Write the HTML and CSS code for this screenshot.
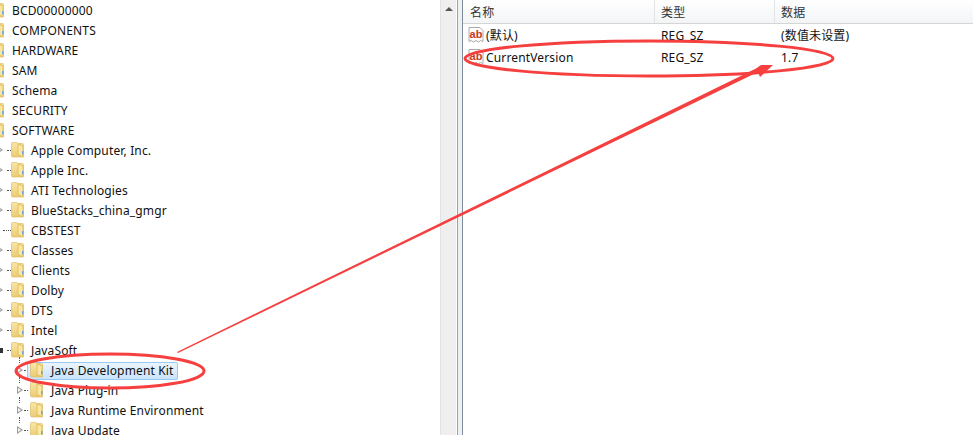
FILE: index.html
```html
<!DOCTYPE html>
<html lang="zh-CN">

<head>
    <meta charset="UTF-8">
    <title>Registry Editor</title>
    <link rel="stylesheet" href="styles.css">
</head>

<body>
    <svg class="defs" width="0" height="0">
        <linearGradient id="folderBack" x1="0" y1="0" x2="0" y2="1">
            <stop offset="0" stop-color="#f8e7a8"/>
            <stop offset="1" stop-color="#eccb74"/>
        </linearGradient>
        <symbol id="folder" viewBox="0 0 16 16">
            <path d="M.5 1.500Q.5 .5 1.500 .5H6l1 1h4.500q1 0 1 1V14q0 1-1 1H2Q.5 15 .5 13.500z" fill="url(#folderBack)" stroke="#d9b660" stroke-width="0.6"/>
            <path d="M6.500 1l6 2.500V15.500L6.500 13z" fill="#e6bf5c"/>
            <path d="M7.500 2.500l4 1.700v9.800l-4-1.700z" fill="#f9e7a6"/>
            <path d="M11 9h1.500v3.500H11z" fill="#6fa8d8"/>
        </symbol>
        <symbol id="page" viewBox="0 0 16 16">
            <path d="M1 .5h11l3 3v11l-2.500-1-2 1.500-2.500-1.500-2.500 1.500L3 13.500 1 14.500z" fill="#fff" stroke="#a9a9a9"/>
        </symbol>
    </svg>

    <div class="tree">
        <div class="row"><svg class="folder"><use href="#folder"/></svg>BCD00000000</div>
        <div class="row"><svg class="folder"><use href="#folder"/></svg>COMPONENTS</div>
        <div class="row"><svg class="folder"><use href="#folder"/></svg>HARDWARE</div>
        <div class="row"><svg class="folder"><use href="#folder"/></svg>SAM</div>
        <div class="row"><svg class="folder"><use href="#folder"/></svg>Schema</div>
        <div class="row"><svg class="folder"><use href="#folder"/></svg>SECURITY</div>
        <div class="row"><svg class="folder"><use href="#folder"/></svg>SOFTWARE</div>

        <div class="row lvl1"><i class="toggle"></i><i class="dots"></i><svg class="folder"><use href="#folder"/></svg>Apple Computer, Inc.</div>
        <div class="row lvl1"><i class="toggle"></i><i class="dots"></i><svg class="folder"><use href="#folder"/></svg>Apple Inc.</div>
        <div class="row lvl1"><i class="toggle"></i><i class="dots"></i><svg class="folder"><use href="#folder"/></svg>ATI Technologies</div>
        <div class="row lvl1"><i class="toggle"></i><i class="dots"></i><svg class="folder"><use href="#folder"/></svg>BlueStacks_china_gmgr</div>
        <div class="row lvl1"><i class="toggle none"></i><i class="dots"></i><svg class="folder"><use href="#folder"/></svg>CBSTEST</div>
        <div class="row lvl1"><i class="toggle"></i><i class="dots"></i><svg class="folder"><use href="#folder"/></svg>Classes</div>
        <div class="row lvl1"><i class="toggle"></i><i class="dots"></i><svg class="folder"><use href="#folder"/></svg>Clients</div>
        <div class="row lvl1"><i class="toggle"></i><i class="dots"></i><svg class="folder"><use href="#folder"/></svg>Dolby</div>
        <div class="row lvl1"><i class="toggle"></i><i class="dots"></i><svg class="folder"><use href="#folder"/></svg>DTS</div>
        <div class="row lvl1"><i class="toggle"></i><i class="dots"></i><svg class="folder"><use href="#folder"/></svg>Intel</div>
        <div class="row lvl1"><i class="toggle open"></i><i class="dots"></i><svg class="folder"><use href="#folder"/></svg>JavaSoft</div>

        <div class="row lvl2"><i class="toggle"></i><i class="dots"></i><span class="selected"><svg class="folder"><use href="#folder"/></svg>Java Development Kit</span></div>
        <div class="row lvl2"><i class="toggle"></i><i class="dots"></i><svg class="folder"><use href="#folder"/></svg>Java Plug-in</div>
        <div class="row lvl2"><i class="toggle"></i><i class="dots"></i><svg class="folder"><use href="#folder"/></svg>Java Runtime Environment</div>
        <div class="row lvl2 last"><i class="toggle"></i><i class="dots"></i><svg class="folder"><use href="#folder"/></svg>Java Update</div>
    </div>

    <div class="scrollbar">
        <div class="scroll-up"></div>
    </div>
    <div class="splitter"></div>

    <div class="values">
        <div class="val-header">
            <div class="col-name">名称</div>
            <div class="col-type">类型</div>
            <div class="col-data">数据</div>
        </div>
        <div class="val-row">
            <div class="col-name"><svg class="regsz" viewBox="0 0 16 16"><use href="#page"/><text x="1.500" y="10.500" class="ab">ab</text></svg>(默认)</div>
            <div class="col-type">REG_SZ</div>
            <div class="col-data">(数值未设置)</div>
        </div>
        <div class="val-row">
            <div class="col-name"><svg class="regsz" viewBox="0 0 16 16"><use href="#page"/><text x="1.500" y="10.500" class="ab">ab</text></svg>CurrentVersion</div>
            <div class="col-type">REG_SZ</div>
            <div class="col-data">1.7</div>
        </div>
    </div>

    <!-- hand drawn annotation on top of the screenshot -->
    <svg class="marks" width="973" height="435" viewBox="0 0 973 435">
        <ellipse cx="110" cy="371" rx="94" ry="17" fill="none" stroke="#f5403f" stroke-width="3"/>
        <ellipse cx="649" cy="58.500" rx="184" ry="17.500" fill="none" stroke="#f5403f" stroke-width="3"/>
        <path d="M177 352L756 68.500L761 65H773L760 77L758 72L178 353Z" fill="#f5403f"/>
    </svg>
</body>

</html>
```

FILE: styles.css
```css
body {
    margin: 0;
    display: flex;
    height: 435px;
    overflow: hidden;
    position: relative;
    background-color: white;
    color: #111;
    font-family: "Noto Sans", "Noto Sans CJK SC", sans-serif;
    font-size: 12px;
    letter-spacing: 0.15px;
}

.defs {
    position: absolute;
}

.tree {
    width: 440px;
    flex-shrink: 0;
    overflow: hidden;
}

.row {
    height: 20px;
    display: flex;
    align-items: center;
    white-space: nowrap;
    position: relative;
}

.folder {
    width: 16px;
    height: 16px;
    flex-shrink: 0;
    margin-left: -9px;
    margin-right: 5px;
}

.lvl1 .folder {
    margin-left: 0;
    margin-right: 4px;
}

.lvl2 .folder {
    margin-left: 0;
    margin-right: 5px;
}

.toggle {
    width: 6px;
    flex-shrink: 0;
    height: 9px;
    position: relative;
}

/* outline triangle: grey one with a white one on top */
.toggle::before {
    content: "";
    position: absolute;
    left: -3px;
    top: 0;
    border-left: 6px solid #9a9a9a;
    border-top: 4.5px solid transparent;
    border-bottom: 4.5px solid transparent;
}

.toggle::after {
    content: "";
    position: absolute;
    left: -2px;
    top: 2px;
    border-left: 3px solid white;
    border-top: 2.5px solid transparent;
    border-bottom: 2.5px solid transparent;
}

.toggle.none::before,
.toggle.none::after,
.toggle.open::after {
    display: none;
}

.toggle.open::before {
    left: -2px;
    top: 2px;
    border: none;
    width: 5px;
    height: 5px;
    background-color: #333;
}

.dots {
    width: 4px;
    flex-shrink: 0;
    height: 0;
    margin-left: 1px;
    border-top: 1px dotted #555;
}

.toggle.none + .dots {
    width: 8px;
    margin-left: -3px;
}

.lvl2 {
    padding-left: 17px;
}

.lvl2::before {
    content: "";
    position: absolute;
    left: 19px;
    top: -3px;
    height: 6px;
    border-left: 1px dotted #555;
}

.lvl2 .toggle::before {
    left: 0;
}

.lvl2 .toggle::after {
    left: 1px;
}

.lvl2 .dots {
    margin-left: 1px;
    margin-right: 2px;
}

.selected {
    height: 18px;
    display: flex;
    align-items: center;
    margin-top: 2px;
    margin-left: -3px;
    padding: 0 3px 2px 2px;
    box-sizing: border-box;
    border: 1px solid #99c8f0;
    border-radius: 2px;
    background: linear-gradient(#eaf5fe, #c9e3fa);
}

.scrollbar {
    width: 16px;
    flex-shrink: 0;
    background-color: #efefef;
    border-left: 1px solid #e2e2e2;
    box-sizing: border-box;
}

.scroll-up {
    height: 17px;
    position: relative;
}

.scroll-up::before {
    content: "";
    position: absolute;
    left: 4px;
    top: 7px;
    border-bottom: 4px solid #555;
    border-left: 4px solid transparent;
    border-right: 4px solid transparent;
}

.splitter {
    width: 6px;
    flex-shrink: 0;
    box-sizing: border-box;
    margin-left: 1px;
    background-color: #f0f0f0;
    border-left: 1px solid #a0a0a0;
    border-right: 1px solid #7d8c9d;
}

.values {
    flex: 1;
}

.val-header {
    height: 24px;
    display: flex;
    align-items: center;
    box-sizing: border-box;
    border-bottom: 1px solid #d5d5d5;
    background: linear-gradient(#ffffff, #f3f4f6);
    color: #333;
}

.val-header .col-name {
    padding-left: 7px;
}

.val-header .col-type,
.val-header .col-data {
    border-left: 1px solid #e2e3e5;
    padding-left: 6px;
    height: 100%;
    display: flex;
    align-items: center;
}

.val-row {
    height: 22px;
    display: flex;
    align-items: center;
}

.col-name {
    width: 191px;
    display: flex;
    align-items: center;
    box-sizing: border-box;
}

.col-type {
    width: 120px;
    box-sizing: border-box;
    padding-left: 7px;
}

.col-data {
    flex: 1;
    box-sizing: border-box;
    padding-left: 7px;
}

.regsz {
    width: 16px;
    height: 16px;
    margin-left: 5px;
    margin-right: 2px;
}

.ab {
    font-family: "Liberation Sans", sans-serif;
    font-size: 11px;
    font-weight: bold;
    fill: #c9381a;
}

.marks {
    position: absolute;
    left: 0;
    top: 0;
}
```
